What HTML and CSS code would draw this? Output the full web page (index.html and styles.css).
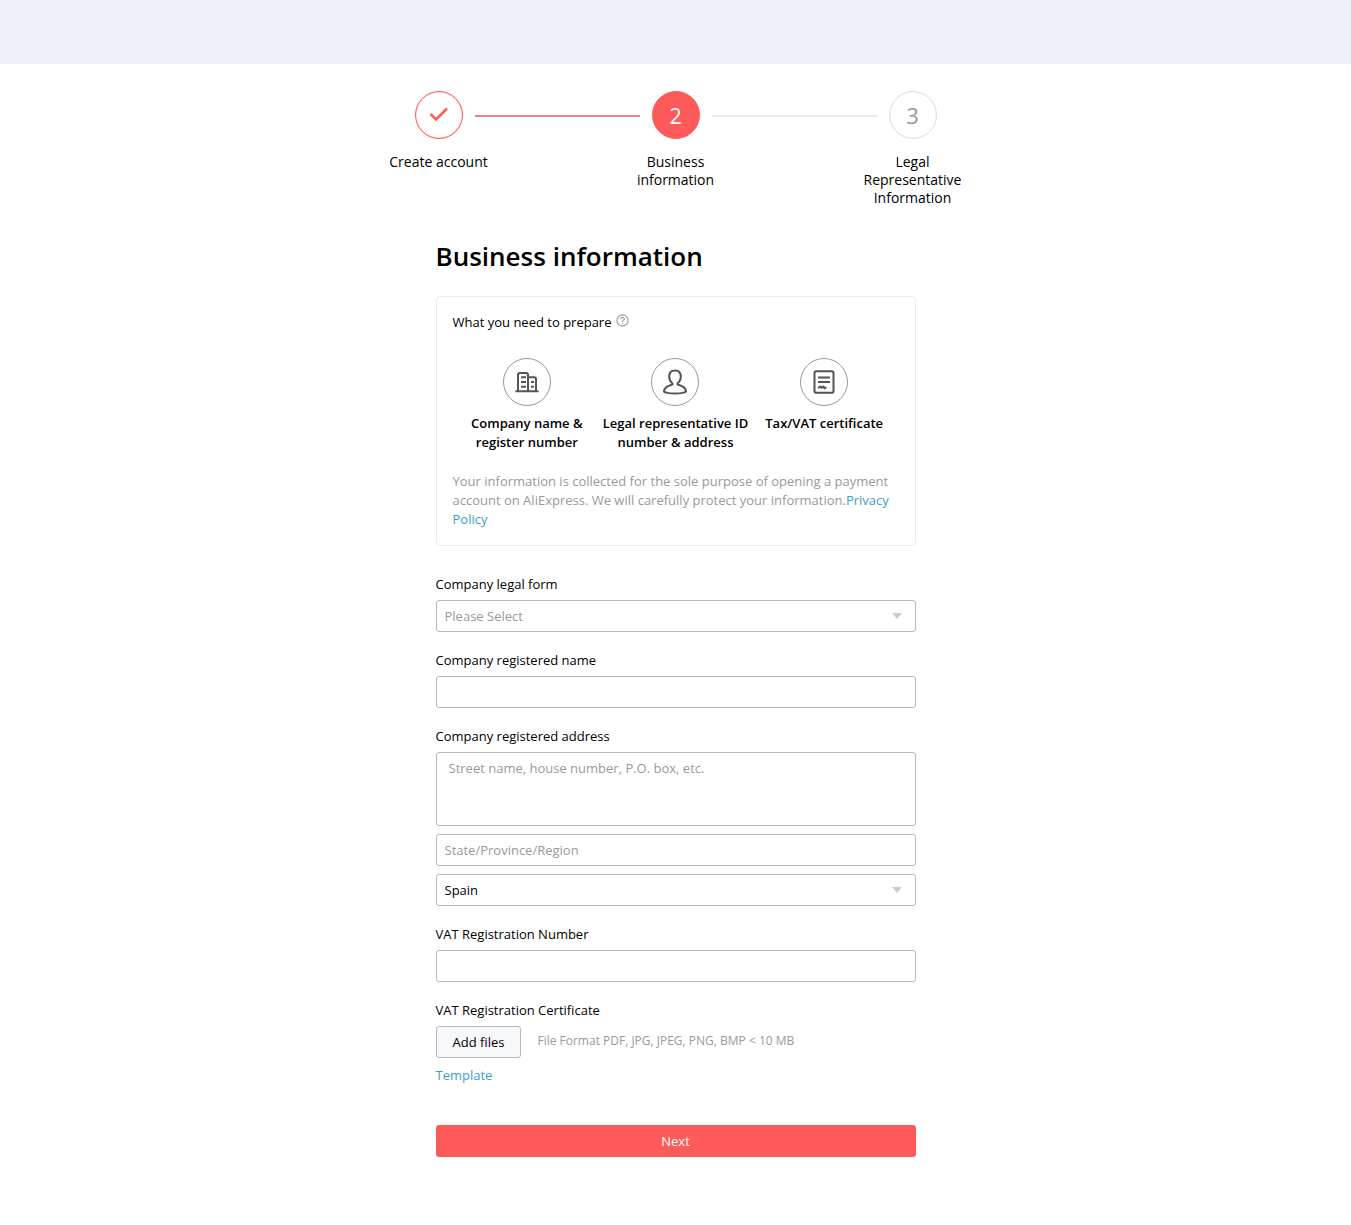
FILE: index.html
```
<!DOCTYPE html>
<html lang="en">
<head>
    <meta charset="UTF-8">
    <meta name="viewport" content="width=device-width, initial-scale=1.0">
    <title>Business information</title>
    <link rel="stylesheet" href="styles.css">
</head>
<body>
<header class="top-bar"></header>

<main>
    <div class="steps">
        <div class="step step-done">
            <div class="step-circle">
                <svg width="20" height="20" viewBox="0 0 20 20" fill="none" stroke="currentColor" stroke-width="2.6">
                    <path d="M1.5 9L7 14.5L18 3.5"/>
                </svg>
            </div>
            <div class="step-label">Create account</div>
        </div>
        <div class="step-line step-line-done"></div>
        <div class="step step-active">
            <div class="step-circle">2</div>
            <div class="step-label">Business information</div>
        </div>
        <div class="step-line"></div>
        <div class="step">
            <div class="step-circle">3</div>
            <div class="step-label">Legal Representative Information</div>
        </div>
    </div>

    <form class="business-form">
        <h1>Business information</h1>

        <section class="prepare">
            <div class="prepare-title">
                What you need to prepare
                <svg class="help-icon" width="13" height="13" viewBox="0 0 12 12" fill="none" stroke="#999">
                    <circle cx="6" cy="6" r="5.2"/>
                    <path d="M4.3 4.8C4.3 3.7 5 3.1 6 3.1S7.7 3.7 7.7 4.6C7.7 5.7 6 5.8 6 7.2M6 8.2V9.3"/>
                </svg>
            </div>
            <div class="prepare-list">
                <div class="prepare-item">
                    <div class="prepare-icon">
                        <svg width="26" height="26" viewBox="0 0 26 26" fill="none" stroke="#555" stroke-width="2">
                            <path d="M1.5 22.3H24.5M4 22V5.8Q4 4 5.8 4H12.2Q14 4 14 5.8V22M14 8.2H20.2Q22 8.2 22 10V22"/>
                            <path d="M7 8.2H12M7 13H12M7 17.8H12M17 13H20M17 17.8H20"/>
                        </svg>
                    </div>
                    Company name &amp; register number
                </div>
                <div class="prepare-item">
                    <div class="prepare-icon">
                        <svg width="26" height="26" viewBox="0 0 26 26" fill="none" stroke="#555" stroke-width="2" stroke-linejoin="round">
                            <path d="M10.3 14.3C8.4 12.8 7.2 10.6 7.2 7.8C7.2 3.8 9.6 1.6 13 1.6S18.8 3.8 18.8 7.8C18.8 10.6 17.6 12.8 15.7 14.3C15.2 15 15.4 15.5 16.2 15.8C20.3 16.8 23.6 19 24 22.3C24.1 23.7 18.5 24.4 13 24.4S1.9 23.7 2 22.3C2.4 19 5.7 16.8 9.8 15.8C10.6 15.5 10.8 15 10.3 14.3Z"/>
                        </svg>
                    </div>
                    Legal representative ID number &amp; address
                </div>
                <div class="prepare-item">
                    <div class="prepare-icon">
                        <svg width="26" height="26" viewBox="0 0 26 26" fill="none" stroke="#555" stroke-width="2">
                            <rect x="3.5" y="2.3" width="19" height="21.4" rx="1.8"/>
                            <path d="M7 8.5H19M7 13H19M7 19L9.5 17.6L10.5 18.8L12.5 17.6L13.5 19.2L15.5 18.3"/>
                        </svg>
                    </div>
                    Tax/VAT certificate
                </div>
            </div>
            <p class="prepare-note">Your information is collected for the sole purpose of opening a payment account on AliExpress. We will carefully protect your information.<a href="#">Privacy Policy</a></p>
        </section>

        <div class="field">
            <label for="legal-form">Company legal form</label>
            <div class="select">
                <select id="legal-form" required>
                    <option value="">Please Select</option>
                </select>
            </div>
        </div>
        <div class="field">
            <label for="company-name">Company registered name</label>
            <input id="company-name" type="text">
        </div>
        <div class="field">
            <label for="address">Company registered address</label>
            <textarea id="address" placeholder="Street name, house number, P.O. box, etc."></textarea>
            <input type="text" placeholder="State/Province/Region" aria-label="State/Province/Region">
            <div class="select">
                <select aria-label="Country">
                    <option>Spain</option>
                </select>
            </div>
        </div>
        <div class="field">
            <label for="vat-number">VAT Registration Number</label>
            <input id="vat-number" type="text">
        </div>
        <div class="field">
            <label for="add-files">VAT Registration Certificate</label>
            <div class="upload">
                <button id="add-files" class="btn-upload" type="button">Add files</button>
                <span class="upload-hint">File Format PDF, JPG, JPEG, PNG, BMP &lt; 10 MB</span>
            </div>
            <a href="#">Template</a>
        </div>

        <button class="btn-next" type="submit">Next</button>
    </form>
</main>
</body>
</html>
```
FILE: styles.css
```
* {
    box-sizing: border-box;
}
body {
    font-family: "Open Sans", Arial, sans-serif;
    font-size: 13px;
    line-height: 19px;
    margin: 0;
    color: #000;
    background-color: #fff;
}
a {
    color: #3aa0c9;
    text-decoration: none;
}
.top-bar {
    height: 64px;
    background-color: #eff0f5;
}
main {
    padding: 27px 16px 68px;
}

/* steps */
.steps {
    display: flex;
    align-items: flex-start;
    max-width: 574px;
    min-height: 120px;
    margin: 0 auto 28px;
}
.step {
    width: 100px;
    flex-shrink: 0;
}
.step-circle {
    display: flex;
    align-items: center;
    justify-content: center;
    width: 48px;
    height: 48px;
    margin: 0 auto 14px;
    border: 1px solid #e0e0e0;
    border-radius: 50%;
    box-shadow: inset 0 0 1px #e0e0e0;
    font-size: 22px;
    color: #999;
}
.step-done .step-circle {
    border-color: #ff5a5a;
    box-shadow: inset 0 0 1px #ff5a5a;
    color: #ff5a5a;
}
.step-active .step-circle {
    border-color: #ff5a5a;
    box-shadow: none;
    background-color: #ff5a5a;
    color: #fff;
}
.step-label {
    font-size: 14px;
    line-height: 18px;
    text-align: center;
}
.step-line {
    flex: 1;
    height: 2px;
    margin: 24px -14px 0;
    background-color: #ebebeb;
}
.step-line-done {
    background-color: #ff7c7c;
}

/* form */
.business-form {
    max-width: 480px;
    margin: 0 auto;
}
h1 {
    margin: 0 0 22px;
    font-size: 26px;
    font-weight: 600;
    line-height: 35px;
}
.prepare {
    margin-bottom: 28px;
    padding: 16px;
    border: 1px solid #ebebeb;
    border-radius: 4px;
}
.prepare-title {
    margin-bottom: 26px;
}
.help-icon {
    margin-left: 1px;
}
.prepare-list {
    display: grid;
    grid-template-columns: repeat(3, 1fr);
    margin-bottom: 20px;
}
.prepare-item {
    font-weight: 600;
    text-align: center;
}
.prepare-icon {
    display: flex;
    align-items: center;
    justify-content: center;
    width: 48px;
    height: 48px;
    margin: 0 auto 8px;
    border: 1px solid #999;
    border-radius: 50%;
}
.prepare-note {
    margin: 0;
    color: #999;
}
.field {
    margin-bottom: 18px;
}
.field label {
    display: block;
    margin-bottom: 6px;
    line-height: 20px;
}
input,
textarea,
select {
    display: block;
    width: 100%;
    height: 32px;
    margin: 0;
    padding: 0 8px;
    border: 1px solid #b3b8c4;
    border-radius: 3px;
    background-color: #fff;
    font: inherit;
    color: #000;
}
textarea {
    height: 74px;
    padding: 6px 12px;
    resize: none;
}
textarea + input,
input + .select {
    margin-top: 8px;
}
::placeholder {
    color: #999;
    opacity: 1;
}
.select {
    position: relative;
}
.select select {
    appearance: none;
}
.select select:invalid {
    color: #999;
}
.select::after {
    content: "";
    position: absolute;
    top: 13px;
    right: 14px;
    border: 5px solid transparent;
    border-top: 6px solid #ccc;
    border-bottom: 0;
    pointer-events: none;
}
.upload {
    display: flex;
    margin-bottom: 8px;
}
button {
    height: 32px;
    border-radius: 3px;
    font: inherit;
    cursor: pointer;
}
.btn-upload {
    padding: 0 16px;
    border: 1px solid #b3b8c4;
    background-color: #f7f8fa;
    color: #000;
}
.upload-hint {
    margin-left: 16px;
    font-size: 12px;
    line-height: 30px;
    color: #999;
}
.btn-next {
    width: 100%;
    margin-top: 22px;
    border: none;
    background-color: #ff5a5a;
    color: #fff;
}
```
